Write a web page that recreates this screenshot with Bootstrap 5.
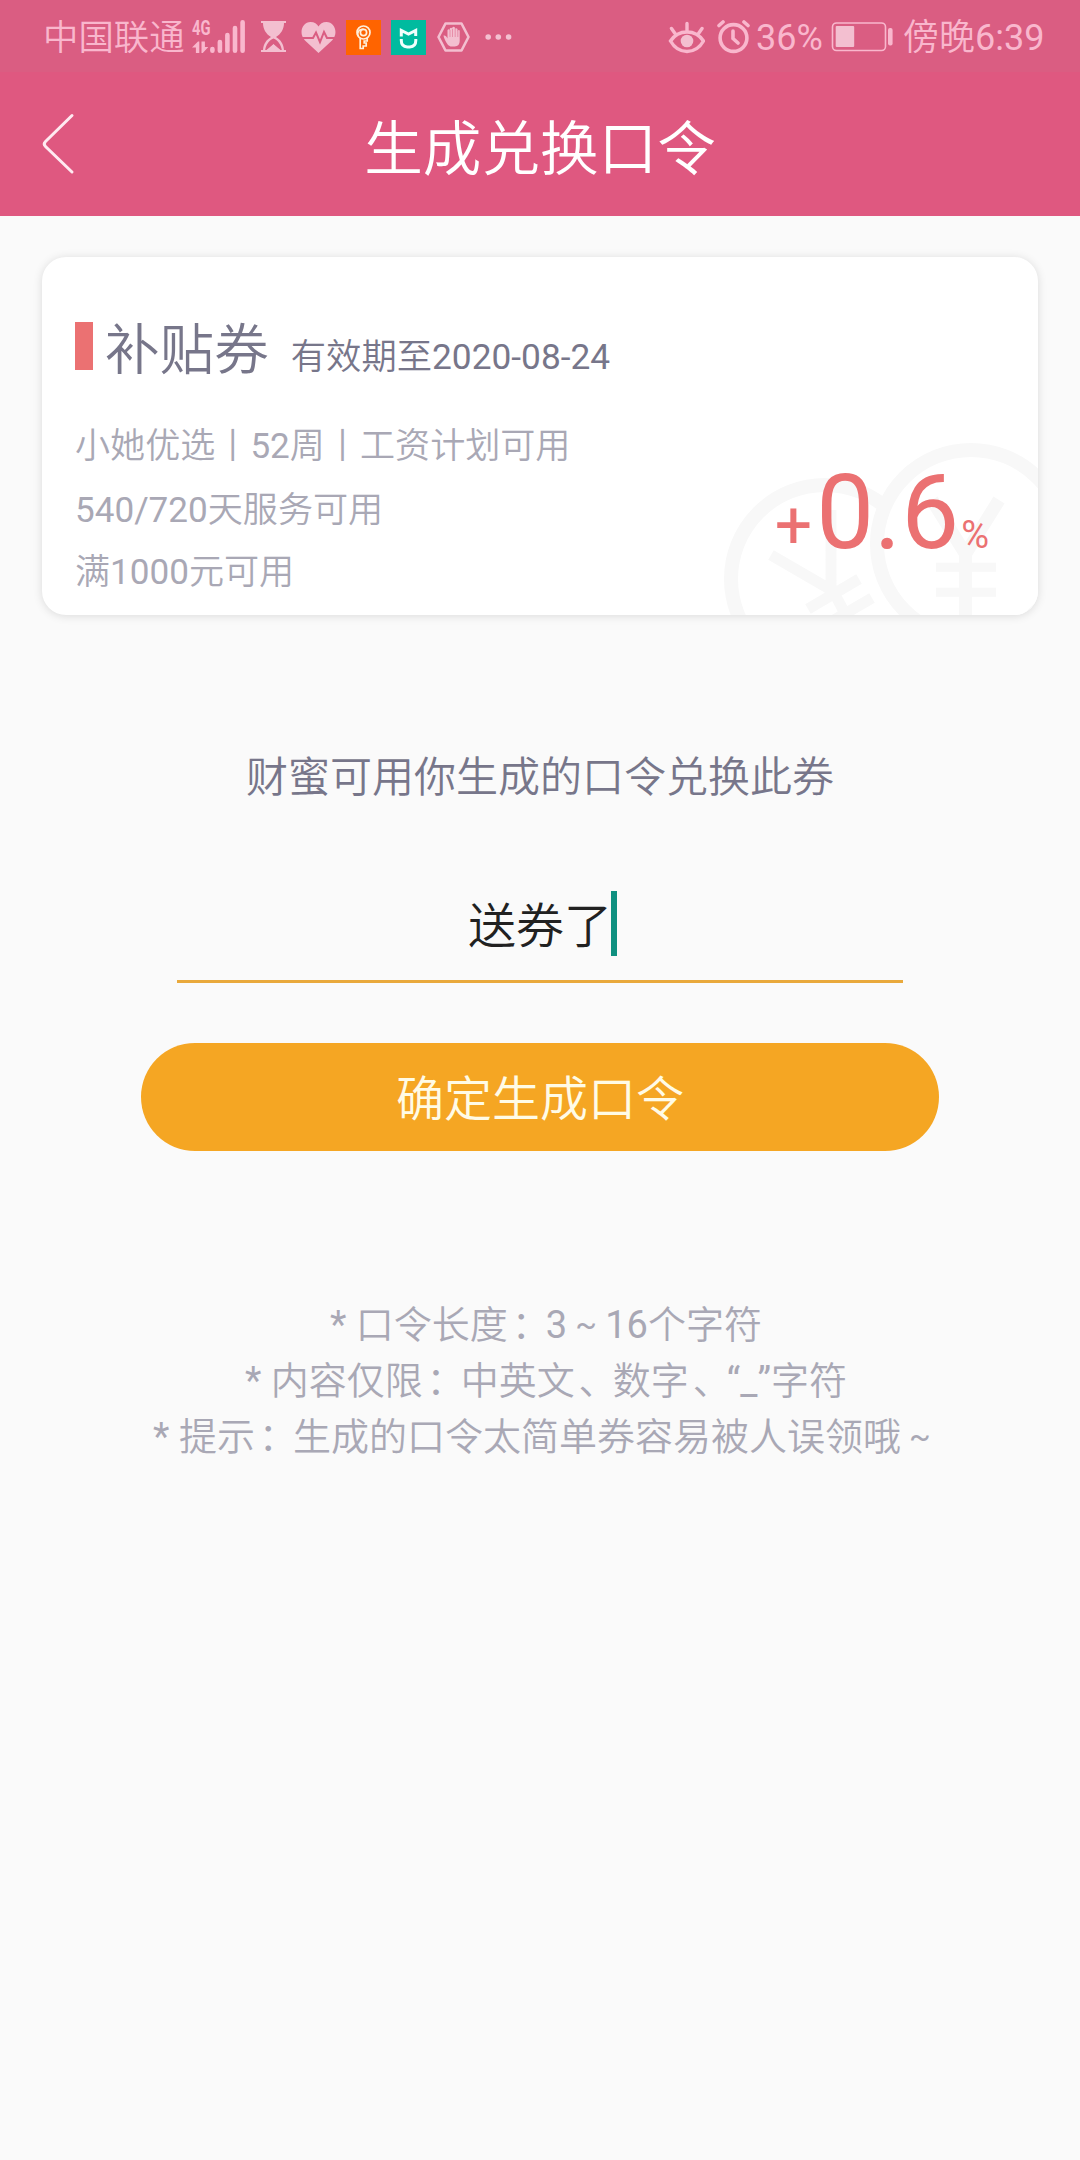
<!DOCTYPE html>
<html lang="zh-CN">
<head>
<meta charset="utf-8">
<meta name="viewport" content="width=device-width, initial-scale=1">
<title>生成兑换口令</title>
<link href="https://cdn.jsdelivr.net/npm/bootstrap@5.3.0/dist/css/bootstrap.min.css" rel="stylesheet">
<style>
  body { background: #fafafa; font-family: Roboto, "Noto Sans CJK SC", sans-serif; font-weight: 350; color: #77768a; min-height: 2160px; overflow-x: hidden; }
  svg { display: block; flex: none; }
  .latin { font-weight: 400; }
  .status-bar { height: 72px; background: #da5d82; color: #f9b7cd; font-size: 36px; line-height: 44px; padding: 2px 36px 0 43px; white-space: nowrap; }
  .carrier { font-size: 35.4px; width: 142px; padding-top: 2px; }
  .clock { width: 141px; margin-left: 10px; padding-top: 1px; }
  .battery-level { margin-left: 6px; width: 67px; padding-top: 1px; }
  .app-header { height: 144px; background: #df5880; color: #fff; }
  .back-link { width: 112px; padding-left: 40px; }
  .page-title { font-size: 58.6px; line-height: 72px; font-weight: 350; padding-top: 11px; margin: 0; }
  .coupon { margin: 41px 42px 0; height: 358px; border: 0; border-radius: 24px; background: #fff; box-shadow: 0 1px 10px rgba(0,0,0,.13); overflow: hidden; color: inherit; }
  .coupon-inner { padding: 63px 49px 0 33px; }
  .coupon-name { font-size: 54.6px; line-height: 60px; margin-left: 12px; }
  .tag-bar { width: 18px; height: 48px; background: #eb7172; align-self: flex-start; margin-top: 2px; }
  .expiry { font-size: 35.3px; line-height: 44px; margin-left: 22px; }
  .terms { font-size: 35.1px; line-height: 44px; color: #a9a8b5; margin-top: 44px; }
  .terms li + li { margin-top: 20px; }
  .terms li:last-child { margin-top: 18px; }
  .amount { color: #eb7172; line-height: 105px; margin-bottom: 27px; white-space: nowrap; font-weight: 400; }
  .amount-plus { font-size: 66px; margin-right: 4px; }
  .amount-value { font-size: 103px; }
  .amount-unit { font-size: 38px; margin-left: 2px; }
  .hint { font-size: 42px; line-height: 50px; margin-top: 138px; }
  .code-field { width: 726px; margin-top: 88px; padding-left: 5px; border-bottom: 3px solid #e9a93c; height: 92px; color: #212121; font-size: 48px; line-height: 72px; }
  .caret { width: 6px; height: 65px; background: #0f9080; margin-left: -1px; }
  .btn-confirm { width: 798px; height: 108px; margin-top: 60px; padding: 6px 0 0; background: #f5a623; color: #fffbe6; font-size: 48px; line-height: 60px; font-weight: 350; border: 0; }
  .btn-confirm:hover { background: #f5a623; color: #fffbe6; }
  .rules { margin-top: 146px; padding-left: 12px; font-size: 38px; line-height: 56px; color: #a9a8b5; }
  .rules > div { height: 56px; }
  .tilde { display: inline-block; width: 1em; text-align: center; vertical-align: .07em; font-weight: 400; line-height: 1; }
  .tilde > span { font-size: .84em; }
  .punct { padding-left: .1em; letter-spacing: -.1em; }
</style>
</head>
<body>
<div class="status-bar d-flex align-items-center">
  <span class="carrier">中国联通</span>
  <svg class="overflow-visible" style="margin-left:5px" width="55" height="52" viewBox="190 10 55 52" fill="#f9b7cd">
    <text x="192" y="34" font-family="Roboto" font-weight="700" font-size="20" textLength="18.500" lengthAdjust="spacingAndGlyphs">4G</text>
    <path d="M192 46.500l6-6h1.300V52h-3.400v-5.500zM201.500 40.500h3.400V46h3.400l-5.500 6h-1.300z"/>
    <g stroke="#f9b7cd" stroke-width="4.600" stroke-linecap="round"><path d="M212.400 48v1.800M219.900 41v8.800M227.400 34v15.800M235 27v22.800M242.600 21.300v28.500"/></g>
  </svg>
  <svg style="margin-left:16px" width="25" height="32" viewBox="261 21 25 32" fill="#f3bfd0">
    <path d="M261 21h25v2h-2c0 6-3 11-8 14 5 3 7.500 7 8 13h2v2h-25v-2h2c.5-6 3-10 8-13-5-3-8-8-8-14h-2z"/>
    <path fill="#da5d82" d="M273.500 38.500c-4.500 2-7.500 6-8.300 11.500h1.300l7-5.500 7 5.500h1.300c-.8-5.500-3.800-9.500-8.300-11.500z"/>
    <path d="M266.500 50.500l7-6.500 7 6.500z"/>
  </svg>
  <svg style="margin-left:15px" width="35" height="32" viewBox="301 20 35 32">
    <path fill="#f3bfd0" d="M318.500 52L305 39.500C298 32 302.500 21 310.500 21c4 0 6.500 2 8 4.500 1.500-2.500 4-4.500 8-4.500 8 0 12.500 11 5.500 18.500z"/>
    <path fill="none" stroke="#da5d82" stroke-width="2" d="M301 37h12l3-5.500 4 9.500 4-10 3 6h10"/>
  </svg>
  <svg style="margin-left:10px" width="35" height="35" viewBox="0 0 35 35">
    <path fill="#ff6400" d="M0 0h35v35H0z"/>
    <g fill="none" stroke="#fff0dc" stroke-width="1.700"><circle cx="17.500" cy="12.500" r="6.500"/><circle cx="17.500" cy="12.500" r="3.100"/><path d="M17.500 9.400c-5-1-7 4-5 7M14.200 18v10.500h3V26h3v-3h-2v-2h3v-3"/></g>
  </svg>
  <svg style="margin-left:10px" width="35" height="35" viewBox="0 0 35 35">
    <path fill="#00bb9f" d="M0 0h35v35H0z"/>
    <path fill="none" stroke="#f2fffc" stroke-width="3" d="M10.300 16.500v-6l7.200 3.500 7.200-3.500v5.500M10.300 19v1.500q0 6 6 6.500h2.500q6-.5 6-6.500V19"/>
  </svg>
  <svg style="margin-left:11px" width="33" height="30" viewBox="437 22 33 30">
    <path fill="none" stroke="#f3bfd0" stroke-width="2.600" stroke-linejoin="round" d="M445.500 23.500h16l7 13.500-7 13.500h-16l-7-13.500z"/>
    <path fill="#f3bfd0" d="M448 45c-2.500-3.500-4-6.500-4.500-9.500 1.500-.5 3 .5 4 3V30q1.200-1.500 2.300 0v-1.500q1.300-1.500 2.500 0v-1q1.300-1.500 2.600 0V29q1.300-1.500 2.600 0v1.500q1.200-1 2.200 0V41q0 5-5 5.500h-4.200z"/>
    <path stroke="#da5d82" stroke-width=".5" d="M450 30v7M452.500 29v8M455.200 29v8M457.800 30v7"/>
  </svg>
  <svg style="margin-left:15px" width="27" height="8" viewBox="485 32 27 8" fill="#f3bfd0"><circle cx="488.200" cy="36" r="2.800"/><circle cx="498.300" cy="36" r="2.800"/><circle cx="508.600" cy="36" r="2.800"/></svg>

  <svg class="ms-auto" width="37" height="33" viewBox="668 20 37 33" fill="none" stroke="#f9b7cd" stroke-width="3.400" stroke-linecap="round">
    <path d="M670.500 40c4-6 10-9 16.500-9s12.500 3 16.500 9c-4 7-10 10.500-16.500 10.500S674.500 47 670.500 40zM671.500 27.500l3.500 5M687 22.500V30M702 27.500l-3.500 5"/><circle cx="687" cy="40" r="6.300" fill="#f3bfd0" stroke="none"/>
  </svg>
  <svg style="margin-left:12px" width="33" height="34" viewBox="717 20 33 34" fill="none" stroke="#f9b7cd" stroke-width="3.600" stroke-linecap="round">
    <circle cx="733.500" cy="38" r="13.400"/><path d="M733 31v7.500l5 4.500M719 25.500l4-3.500M748 25.500l-4-3.500"/>
  </svg>
  <span class="battery-level latin">36%</span>
  <svg style="margin-left:8px" width="62" height="30" viewBox="831 22 62 30">
    <rect x="832.500" y="23" width="53" height="27.500" rx="4" fill="none" stroke="#f9b7cd" stroke-width="1.600"/>
    <rect x="835.700" y="26" width="18.500" height="21" rx="1" fill="#f3bfd0"/><rect x="888" y="28" width="4.600" height="17.500" rx="2" fill="#f9b7cd"/>
  </svg>
  <span class="clock">傍晚<span class="latin">6:39</span></span>
</div>

<header class="app-header d-flex align-items-center justify-content-between">
  <a class="back-link" href="#" aria-label="返回">
    <svg width="36" height="62" viewBox="40 113 36 62" fill="none" stroke="#ffeaf1" stroke-width="3" stroke-linecap="round" stroke-linejoin="round"><path d="M72 115.500L45.500 141.500q-2.500 2.500 0 5L72 172"/></svg>
  </a>
  <h1 class="page-title">生成兑换口令</h1>
  <span class="back-link"></span>
</header>

<main>
  <section class="coupon card">
    <svg class="position-absolute bottom-0 end-0" width="330" height="180" viewBox="708 435 330 180" fill="none" stroke="#f8f8f8" stroke-width="14">
      <circle cx="825" cy="579" r="94"/>
      <g stroke-width="11"><path d="M771 555l62 36 14 26M831 510v81M808 609l51-30M822 627l50-29"/></g>
      <circle cx="971" cy="544" r="94" fill="#fff"/>
      <g stroke-width="13"><path d="M932 500l33.500 54L999 500M965.500 550v70"/><path stroke-width="9" d="M936 567.200h60M936 592.200h60"/></g>
    </svg>
    <div class="coupon-inner d-flex justify-content-between h-100 position-relative">
      <div>
        <div class="d-flex align-items-baseline">
          <span class="tag-bar"></span>
          <span class="coupon-name">补贴券</span>
          <span class="expiry">有效期至<span class="latin">2020-08-24</span></span>
        </div>
        <ul class="terms list-unstyled mb-0">
          <li>小她优选丨<span class="latin">52</span>周丨工资计划可用</li>
          <li><span class="latin">540/720</span>天服务可用</li>
          <li>满<span class="latin">1000</span>元可用</li>
        </ul>
      </div>
      <div class="amount d-flex align-items-baseline align-self-end">
        <span class="amount-plus">+</span><span class="amount-value">0.6</span><span class="amount-unit">%</span>
      </div>
    </div>
  </section>

  <p class="hint text-center mb-0">财蜜可用你生成的口令兑换此券</p>

  <div class="code-field mx-auto d-flex justify-content-center" role="textbox">
    <span>送券了</span><span class="caret"></span>
  </div>

  <button type="button" class="btn btn-confirm rounded-pill d-block mx-auto">确定生成口令</button>

  <div class="rules text-center">
    <div><span class="latin">* </span>口令长度<span class="punct">：</span><span class="latin">3</span><span class="tilde"><span>~</span></span><span class="latin">16</span>个字符</div>
    <div><span class="latin">* </span>内容仅限<span class="punct">：</span>中英文<span class="punct">、</span>数字<span class="punct">、</span><span class="latin">“_”</span>字符</div>
    <div><span class="latin">* </span>提示<span class="punct">：</span>生成的口令太简单券容易被人误领哦<span class="tilde"><span>~</span></span></div>
  </div>
</main>
<script src="https://cdn.jsdelivr.net/npm/bootstrap@5.3.0/dist/js/bootstrap.bundle.min.js"></script>
</body>
</html>
